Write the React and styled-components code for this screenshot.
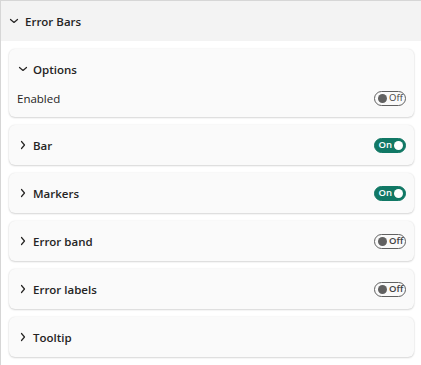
import React from "react";
import styled, { createGlobalStyle } from "styled-components";

const Global = createGlobalStyle`
  html, body { margin: 0; padding: 0; background: #ffffff; }
  body { font-family: "Open Sans", "Noto Sans", sans-serif; color: #252423; }
`;

const Pane = styled.div`
  width: 421px;
  height: 365px;
  box-sizing: border-box;
  border-top: 1px solid #d6d6d6;
  border-left: 1px solid #d6d6d6;
  background: #ffffff;
  overflow: hidden;
`;

const SectionHeader = styled.div`
  height: 40px;
  display: flex;
  align-items: center;
  gap: 6px;
  padding-left: 8px;
  background: #f3f3f3;
  font-size: 11.5px;
  font-weight: 600;
`;

const IconBox = styled.span`
  width: 10px;
  height: 10px;
  display: flex;
  align-items: center;
  justify-content: center;
  flex: none;
`;

const List = styled.div`
  display: flex;
  flex-direction: column;
  gap: 8px;
  padding: 8px 7px 8px 8px;
`;

const Card = styled.div`
  background: #fafafa;
  border-radius: 6px;
  box-shadow: 0 1px 2px rgba(0, 0, 0, 0.14), 0 0 2px rgba(0, 0, 0, 0.1);
  padding-bottom: ${(p) => (p.$open ? "10px" : "0")};
`;

const CardHeader = styled.div`
  height: 40px;
  display: flex;
  align-items: center;
  gap: 5px;
  padding: 0 8px 0 9px;
  font-size: 11.5px;
  font-weight: 600;
`;

const Title = styled.span`
  flex: 1;
`;

const Row = styled.div`
  height: 18px;
  display: flex;
  align-items: center;
  padding: 0 8px 0 8px;
  font-size: 11.5px;
  font-weight: 400;
`;

const Label = styled.span`
  flex: 1;
`;

const Toggle = styled.span`
  width: 32px;
  height: 15px;
  box-sizing: border-box;
  border-radius: 8px;
  display: flex;
  align-items: center;
  flex-direction: ${(p) => (p.$on ? "row-reverse" : "row")};
  gap: 2px;
  padding: 0 2px 0 3px;
  background: ${(p) => (p.$on ? "#117865" : "transparent")};
  border: 1px solid ${(p) => (p.$on ? "#117865" : "#616161")};
  font-size: 9.5px;
  line-height: 1;
  color: ${(p) => (p.$on ? "#ffffff" : "#424242")};
  font-family: "Open Sans", sans-serif;
`;

const Knob = styled.span`
  width: 9px;
  height: 9px;
  border-radius: 50%;
  background: ${(p) => (p.$on ? "#ffffff" : "#616161")};
  flex: none;
`;

const Chevron = ({ down }) => (
  <svg width="10" height="10" viewBox="0 0 10 10" fill="none">
    {down ? (
      <path d="M1.5 3.5 L5 6.5 L8.5 3.5" stroke="#252423" strokeWidth="1.2" strokeLinecap="round" strokeLinejoin="round" />
    ) : (
      <path d="M3.5 1.5 L6.5 5 L3.5 8.5" stroke="#252423" strokeWidth="1.2" strokeLinecap="round" strokeLinejoin="round" />
    )}
  </svg>
);

const Switch = ({ on }) => (
  <Toggle $on={on}>
    <Knob $on={on} />
    <span>{on ? "On" : "Off"}</span>
  </Toggle>
);

const cards = [
  { title: "Bar", toggle: true },
  { title: "Markers", toggle: true },
  { title: "Error band", toggle: false },
  { title: "Error labels", toggle: false },
  { title: "Tooltip", toggle: null },
];

export default function App() {
  return (
    <>
      <Global />
      <Pane>
        <SectionHeader>
          <IconBox>
            <Chevron down />
          </IconBox>
          <span>Error Bars</span>
        </SectionHeader>
        <List>
          <Card $open>
            <CardHeader>
              <IconBox>
                <Chevron down />
              </IconBox>
              <Title>Options</Title>
            </CardHeader>
            <Row>
              <Label>Enabled</Label>
              <Switch on={false} />
            </Row>
          </Card>
          {cards.map((c) => (
            <Card key={c.title}>
              <CardHeader>
                <IconBox>
                  <Chevron />
                </IconBox>
                <Title>{c.title}</Title>
                {c.toggle !== null && <Switch on={c.toggle} />}
              </CardHeader>
            </Card>
          ))}
        </List>
      </Pane>
    </>
  );
}
